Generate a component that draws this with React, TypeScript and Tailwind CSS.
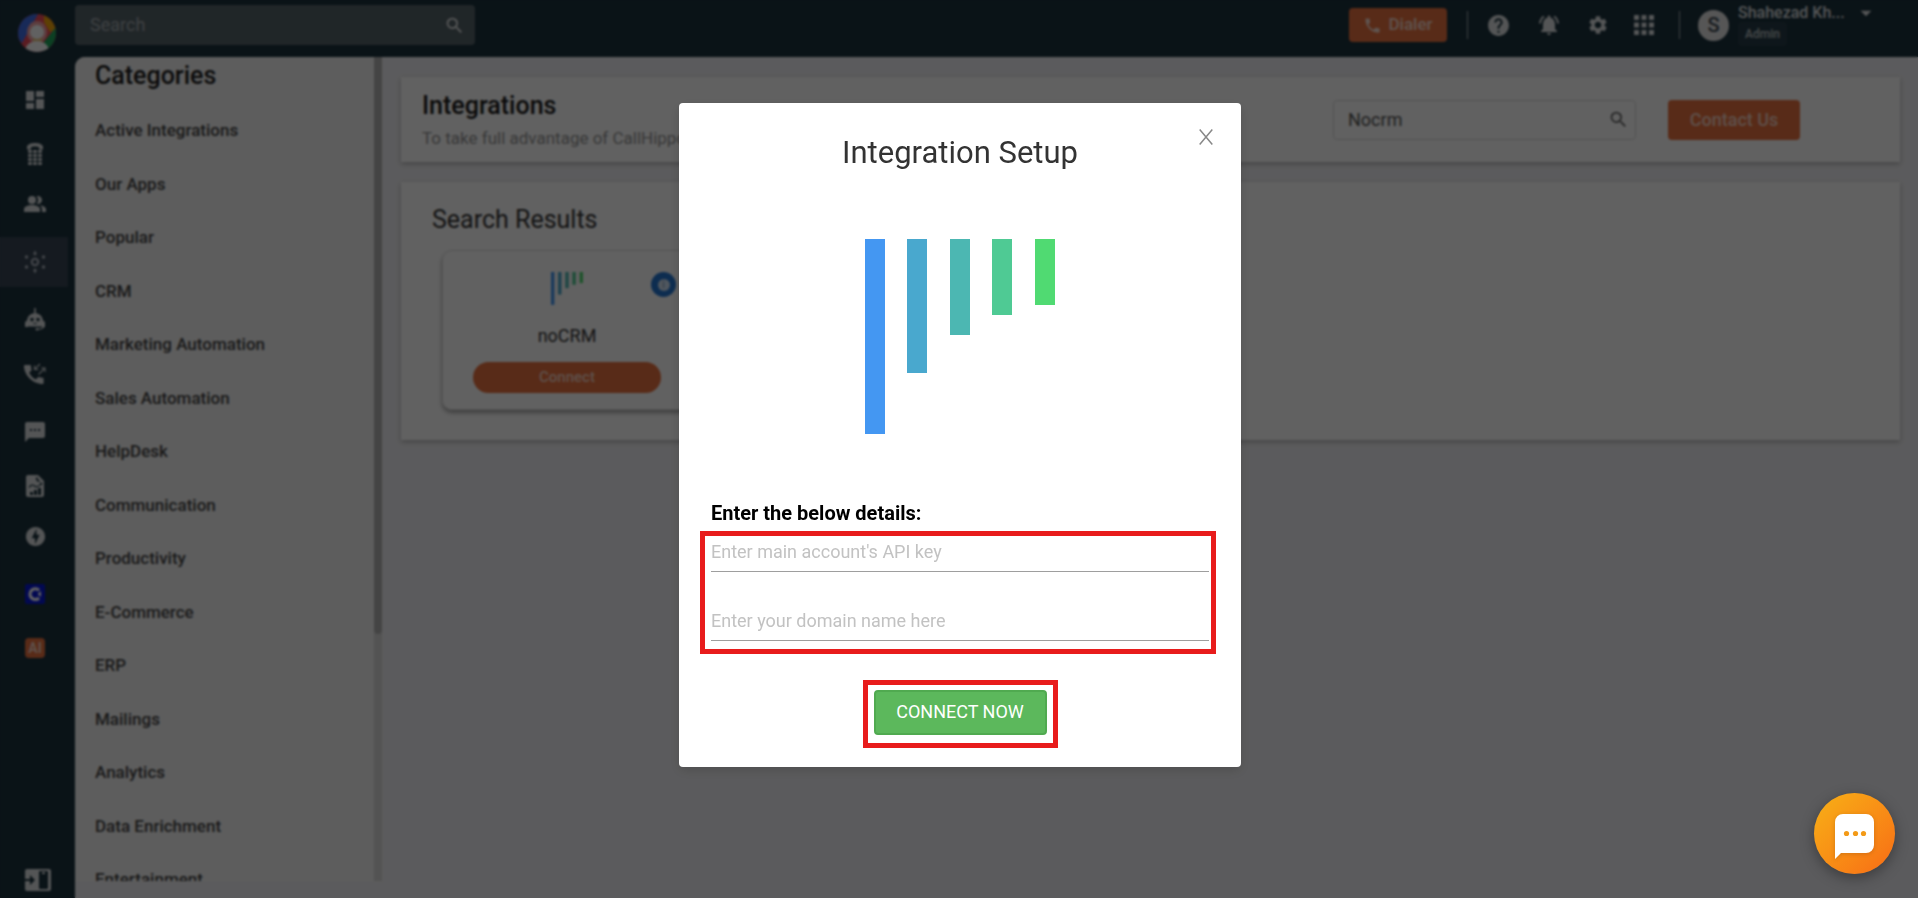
import type { ReactNode } from "react";
import { clsx } from "clsx";
import {
  MdApps,
  MdArrowDropDown,
  MdDashboard,
  MdHelp,
  MdNotificationsActive,
  MdOfflineBolt,
  MdPeopleAlt,
  MdPhone,
  MdSearch,
  MdSettings,
  MdSms,
} from "react-icons/md";

const categories = [
  "Active Integrations",
  "Our Apps",
  "Popular",
  "CRM",
  "Marketing Automation",
  "Sales Automation",
  "HelpDesk",
  "Communication",
  "Productivity",
  "E-Commerce",
  "ERP",
  "Mailings",
  "Analytics",
  "Data Enrichment",
  "Entertainment",
];

function NoCrmLogo({ className }: { className: string }) {
  return (
    <svg viewBox="0 0 190 196" className={className} role="img" aria-label="noCRM logo">
      <rect x="0" width="20" height="195" fill="#4497f2" />
      <rect x="42" width="20" height="134" fill="#49a8ce" />
      <rect x="85" width="20" height="96" fill="#4cb7b2" />
      <rect x="127" width="20" height="76" fill="#4fca94" />
      <rect x="170" width="20" height="66" fill="#50da72" />
    </svg>
  );
}

function BrandLogo() {
  return (
    <svg viewBox="0 0 38 38" className="h-[38px] w-[38px]" role="img" aria-label="CallHippo">
      <defs>
        <clipPath id="brand">
          <circle cx="19" cy="19" r="19" />
        </clipPath>
      </defs>
      <g clipPath="url(#brand)">
        <rect width="38" height="38" fill="#ee4b5a" />
        <path d="M0 0h20L4 29l-4-4z" fill="#3f6ee8" />
        <path d="M26 0h12v15l-6 3-6-10z" fill="#f5a70b" />
        <path d="M38 13v25H26l-1-9z" fill="#1fa85c" />
        <path d="M9 18a10 11 0 0 1 20 0c0 6-4 11-10 11S9 24 9 18z" fill="#f2a3a6" />
        <path d="M15 24h9v6h-9z" fill="#e8c07a" />
        <circle cx="19" cy="18" r="7" fill="#fff" />
        <path d="M7 38c0-7 5-11 12-11s12 4 12 11z" fill="#fff" />
      </g>
    </svg>
  );
}

function DialpadPhoneIcon() {
  return (
    <svg viewBox="0 0 18 24" className="h-6 w-[18px]" fill="currentColor">
      <path d="M1 7.500V5C1 2.500 5 1 9 1s8 1.500 8 4v2.500h-4V5.200C11.500 4.300 6.500 4.300 5 5.200v2.300z" />
      {[8, 12, 16, 20].map((y) =>
        [2, 7, 12].map((x) => <rect key={`${x}-${y}`} x={x} y={y} width="4" height="3" rx="1" />),
      )}
    </svg>
  );
}

function HubIcon() {
  return (
    <svg viewBox="0 0 24 24" className="h-6 w-6" fill="currentColor">
      <circle cx="12" cy="12" r="3.200" fill="none" stroke="currentColor" strokeWidth="2" />
      <path d="M12 .5l1.800 3-1 1.700h-1.600l-1-1.700zM12 23.500l1.800-3-1-1.700h-1.600l-1 1.700z" />
      <circle cx="3.500" cy="7" r="1.700" />
      <circle cx="20.500" cy="7" r="1.700" />
      <circle cx="3.500" cy="17" r="1.700" />
      <circle cx="20.500" cy="17" r="1.700" />
    </svg>
  );
}

function BotIcon() {
  return (
    <svg viewBox="0 0 24 24" className="h-6 w-6">
      <path
        fill="currentColor"
        fillRule="evenodd"
        d="M11.200 0h1.600v5.200c4.200.4 6.700 3.300 7.200 7.300L22 14v5h-3v-.5H5v.5H2v-5l2-1.500c.5-4 3-6.900 7.200-7.300zM9 9.800a1.800 1.800 0 1 0 0 3.600 1.800 1.800 0 0 0 0-3.600zm6 0a1.800 1.800 0 1 0 0 3.600 1.800 1.800 0 0 0 0-3.600zM9.500 15c1.500 1.200 3.500 1.200 5 0z"
      />
      <path d="M21 18.500c-1 2-3 2.700-6 2.700" fill="none" stroke="currentColor" strokeWidth="1.200" />
      <circle cx="14" cy="21.200" r="1.300" fill="currentColor" />
    </svg>
  );
}

function CallFlowIcon() {
  return (
    <svg viewBox="0 0 24 24" className="h-6 w-6">
      <path
        fill="currentColor"
        d="M2 3h5c.6 0 1 .4 1 1 0 1.300.2 2.500.6 3.600.1.300 0 .7-.3 1L6.100 10.800c1.500 2.900 3.800 5.200 6.700 6.700l2.200-2.200c.3-.3.700-.4 1-.2 1.100.4 2.300.6 3.600.6.600 0 1 .4 1 1V21c0 .6-.4 1-1 1C10 22 1 13 1 4c0-.6.400-1 1-1z"
      />
      <path d="M17 2l-5.500 5.500m0-4v4h4M15.500 12.500L22 6m-4 0h4v4" fill="none" stroke="currentColor" strokeWidth="1.100" />
    </svg>
  );
}

function ReportIcon() {
  return (
    <svg viewBox="0 0 20 24" className="h-6 w-5">
      <path fill="currentColor" d="M3 1h10l6 6v14c0 1.100-.9 2-2 2H3c-1.100 0-2-.9-2-2V3c0-1.100.9-2 2-2z" />
      <path d="M12 3.500a2.500 2.500 0 0 0 2.500 3.500M17 9l-2 2" fill="none" stroke="#1b323d" strokeWidth="1.800" />
      <path d="M4 13.500c2-3 4-3 5.500-1.500s3.500 1 5-1" fill="none" stroke="#1b323d" strokeWidth="1.200" />
      <path d="M5 21v-3h3v3zM9 21v-5h3v5zM13 21v-7h3v7z" fill="#1b323d" />
    </svg>
  );
}

function CoachIcon() {
  return (
    <svg viewBox="0 0 20 20" className="h-5 w-5">
      <rect width="20" height="20" rx="2" fill="#0718d6" />
      <path d="M14 6.300A5.300 5.300 0 1 0 14 14" fill="none" stroke="#fff" strokeWidth="3.200" />
      <path d="M12.500 10l3.500-3v6z" fill="#fff" />
    </svg>
  );
}

function ExpandIcon() {
  return (
    <svg viewBox="0 0 26 24" className="h-6 w-[26px]">
      <rect y="1" width="26" height="22" rx="2" fill="currentColor" />
      <rect x="14" y="3" width="9" height="18" rx="1" fill="#1b323d" />
      <rect x="17" y="4" width="3" height="2" fill="currentColor" />
      <path d="M0 11h5V7l5 5-5 5v-4H0z" fill="#1b323d" />
    </svg>
  );
}

const navItems: { label: string; icon: ReactNode; spacing?: string; active?: boolean }[] = [
  { label: "Dashboard", icon: <MdDashboard size={24} /> },
  { label: "Numbers", icon: <DialpadPhoneIcon />, spacing: "mt-1" },
  { label: "Users", icon: <MdPeopleAlt size={24} /> },
  { label: "Integrations", icon: <HubIcon />, spacing: "mt-2", active: true },
  { label: "Voice bot", icon: <BotIcon />, spacing: "mt-2" },
  { label: "Call logs", icon: <CallFlowIcon />, spacing: "mt-1" },
  { label: "Messages", icon: <MdSms size={24} />, spacing: "mt-2" },
  { label: "Reports", icon: <ReportIcon />, spacing: "mt-1" },
  { label: "Power dialer", icon: <MdOfflineBolt size={23} /> },
  { label: "Coach", icon: <CoachIcon />, spacing: "mt-2" },
  {
    label: "AI",
    icon: <span className="flex h-5 w-5 items-center justify-center rounded-sm bg-[#e8713f] text-sm font-bold text-white/70">AI</span>,
    spacing: "mt-1",
  },
];

function Sidebar() {
  return (
    <nav className="flex w-[75px] shrink-0 flex-col pt-[14px] pb-[6px] text-white/85">
      <a href="#home" className="ml-[18px] w-[38px]">
        <BrandLogo />
      </a>
      <ul className="mt-[23px]">
        {navItems.map((item) => (
          <li key={item.label} className={clsx("w-[68px]", item.spacing, item.active && "bg-[#374554]")}>
            <a
              href="#nav"
              aria-label={item.label}
              className={clsx("flex h-[50px] items-center justify-center pl-[2px]", item.active && "text-[#b4bac6]")}
            >
              {item.icon}
            </a>
          </li>
        ))}
      </ul>
      <button aria-label="Expand menu" className="mt-auto ml-[25px] w-[26px]">
        <ExpandIcon />
      </button>
    </nav>
  );
}

function Header() {
  return (
    <header className="flex h-[57px] shrink-0 items-start text-white/85">
      <div className="mt-[5px] flex h-10 w-[400px] items-center rounded bg-[#56646a] pr-[10px] pl-[15px]">
        <input
          aria-label="Search"
          placeholder="Search"
          className="min-w-0 flex-1 bg-transparent text-lg outline-none placeholder:text-[#a3abb0]"
        />
        <MdSearch size={21} />
      </div>
      <div className="ml-auto flex h-[50px] items-center pr-[39px]">
        <button className="flex h-[34px] w-[98px] items-center justify-center gap-[6px] rounded bg-[#e8713f] text-[17px] font-medium text-white/75">
          <MdPhone size={19} />
          Dialer
        </button>
        <span className="ml-5 h-7 w-px bg-white/60" />
        <div className="ml-[18px] flex items-center gap-[26px]">
          <button aria-label="Help"><MdHelp size={25} /></button>
          <button aria-label="Notifications"><MdNotificationsActive size={24} /></button>
          <button aria-label="Settings"><MdSettings size={22} /></button>
        </div>
        <button aria-label="Apps" className="ml-5"><MdApps size={30} /></button>
        <span className="ml-5 h-7 w-px bg-white/60" />
        <span className="ml-[18px] flex h-[31px] w-[31px] items-center justify-center rounded-full bg-[#e2e2e2] text-xl font-medium text-[#3c4750]">
          S
        </span>
        <div className="ml-[9px] flex h-full w-[107px] flex-col items-start pt-1">
          <span className="text-base leading-[18px] font-medium">Shahezad Kh...</span>
          <span className="rounded bg-white/5 px-[7px] text-xs leading-6 font-medium text-white/70">Admin</span>
        </div>
        <button aria-label="Account menu" className="ml-2 self-start"><MdArrowDropDown size={26} /></button>
      </div>
    </header>
  );
}

function CategoryPanel() {
  return (
    <aside className="flex w-[307px] shrink-0 overflow-hidden bg-[#f4f4f4]">
      <div className="flex-1 pl-5">
        <h2 className="pt-1 text-[25px] leading-[30px] font-medium text-[#1f1f1f]">Categories</h2>
        <ul className="pt-3">
          {categories.map((name) => (
            <li key={name} className="odd:h-[54px] even:h-[53px]">
              <a href="#category" className="block text-[17px] leading-[55px] font-medium text-[#444]">
                {name}
              </a>
            </li>
          ))}
        </ul>
      </div>
      <div className="w-2 bg-[#dadada]">
        <div className="h-[70%] rounded-b-sm bg-[#b4b4b4]" />
      </div>
    </aside>
  );
}

function IntegrationCard() {
  return (
    <article className="ml-[10px] flex h-[160px] w-[250px] flex-col items-center rounded-[10px] border border-[#dcdcdc] shadow-[0_3px_4px_rgba(0,0,0,0.35)]">
      <div className="relative flex h-[72px] w-full items-end justify-center pb-[18px]">
        <NoCrmLogo className="h-[33px] w-8" />
        <button
          aria-label="About noCRM"
          className="absolute top-[21px] right-[15px] flex h-[25px] w-[25px] items-center justify-center rounded-full bg-[#2476d2]"
        >
          <span className="flex h-3 w-3 items-center justify-center rounded-full bg-white/80 text-[10px] text-[#6f93b8]">i</span>
        </button>
      </div>
      <h4 className="text-lg leading-[26px] text-[#333]">noCRM</h4>
      <button className="mt-[13px] h-[31px] w-[188px] rounded-full bg-[#e8713f] text-[15px] font-medium text-white/70">Connect</button>
    </article>
  );
}

function IntegrationsPage() {
  return (
    <main className="flex min-w-0 flex-1 flex-col gap-5 pt-5 pr-[18px] pl-[19px]">
      <section className="flex h-[85px] items-center bg-white pr-[100px] pl-[21px] shadow-[0_2px_5px_rgba(0,0,0,0.25)]">
        <div className="flex-1">
          <h1 className="text-[25px] leading-9 font-medium text-[#1c1c1c]">Integrations</h1>
          <p className="text-[17px] leading-7 text-[#949494]">To take full advantage of CallHippo</p>
        </div>
        <div className="flex h-10 w-[303px] items-center rounded border border-[#d9d9d9] pr-[6px] pl-[14px]">
          <input
            aria-label="Search integrations"
            defaultValue="Nocrm"
            className="min-w-0 flex-1 bg-transparent text-lg text-[#555] outline-none"
          />
          <MdSearch size={21} className="text-[#666]" />
        </div>
        <button className="ml-8 h-10 w-[132px] rounded bg-[#e8713f] text-lg font-medium text-white/70">Contact Us</button>
      </section>
      <section className="h-[258px] bg-white pt-5 pl-[31px] shadow-[0_2px_5px_rgba(0,0,0,0.25)]">
        <h3 className="mb-3 text-[25px] leading-9 text-[#333]">Search Results</h3>
        <IntegrationCard />
      </section>
    </main>
  );
}

const fieldStyle = "h-9 w-full border-b border-[#9e9e9e] pb-1 text-lg outline-none placeholder:text-[#c2c2c2]";

function SetupModal() {
  return (
    <div className="fixed inset-0 flex items-start justify-center bg-black/62 pt-[103px] pl-[2px] backdrop-blur-[1px]">
      <form
        role="dialog"
        aria-labelledby="setup-title"
        className="relative flex w-[562px] flex-col items-center rounded bg-white pt-[30px] pb-[19px] shadow-[0_4px_12px_rgba(0,0,0,0.15)]"
      >
        <button type="button" aria-label="Close" className="absolute top-[25px] right-[27px] p-[1px] text-[#888]">
          <svg viewBox="0 0 14 16" className="h-4 w-[14px]" stroke="currentColor" strokeWidth="1.500">
            <path d="M.7.500l12.600 15M13.300.500L.7 15.500" />
          </svg>
        </button>
        <h2 id="setup-title" className="text-[31px] leading-10 text-[#333]">Integration Setup</h2>
        <NoCrmLogo className="mt-[66px] h-[196px] w-[190px]" />
        <h3 className="mt-16 w-full pl-8 text-xl leading-7 font-bold text-black">Enter the below details:</h3>
        <div className="mt-1 ml-[21px] flex h-[123px] w-[516px] flex-col gap-[33px] self-start border-[5px] border-[#e81c1c] pr-[2px] pl-[6px]">
          <input aria-label="API key" placeholder="Enter main account's API key" className={fieldStyle} />
          <input aria-label="Domain name" placeholder="Enter your domain name here" className={fieldStyle} />
        </div>
        <div className="mt-[26px] h-[68px] w-[195px] border-[5px] border-[#e81c1c] px-[6px] pt-[5px]">
          <button
            type="button"
            className="h-[45px] w-full rounded border-2 border-[#50aa50] bg-[#5cb85c] pb-[2px] text-lg leading-none text-white"
          >
            CONNECT NOW
          </button>
        </div>
      </form>
    </div>
  );
}

function ChatButton() {
  return (
    <button
      aria-label="Open chat"
      className="fixed right-[23px] bottom-6 flex h-[81px] w-[81px] items-center justify-center rounded-full bg-linear-135 from-[#f7b016] to-[#f76b15] shadow-[0_4px_14px_rgba(0,0,0,0.35)]"
    >
      <svg viewBox="0 0 39 45" className="mt-[5px] h-[45px] w-[39px] drop-shadow-sm">
        <path d="M8 0h23a8 8 0 0 1 8 8v23a8 8 0 0 1-8 8H6l-6 6V8a8 8 0 0 1 8-8z" fill="#fff" />
        <g fill="#f39a17">
          <circle cx="11.500" cy="19.500" r="2.600" />
          <circle cx="20.500" cy="19.500" r="2.600" />
          <circle cx="28.500" cy="19.500" r="2.600" />
        </g>
      </svg>
    </button>
  );
}

export default function App() {
  return (
    <div className="font-[Roboto,sans-serif]">
      <div className="flex h-screen overflow-hidden bg-[#1b323d]">
        <Sidebar />
        <div className="flex min-w-0 flex-1 flex-col">
          <Header />
          <div className="flex min-h-0 flex-1 overflow-hidden rounded-tl-[10px] bg-[#f0f0f3] pb-[17px]">
            <CategoryPanel />
            <IntegrationsPage />
          </div>
        </div>
      </div>
      <SetupModal />
      <ChatButton />
    </div>
  );
}
